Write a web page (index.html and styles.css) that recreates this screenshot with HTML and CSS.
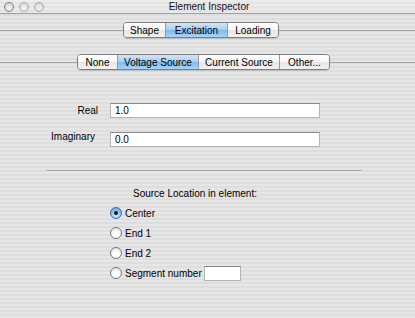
FILE: index.html
```html
<!DOCTYPE html>
<html lang="en">
<head>
  <meta charset="UTF-8" />
  <title>Element Inspector</title>
  <link rel="stylesheet" href="styles.css">
</head>
<body>
  <div class="window">
    <div class="titlebar">
      <div class="lights">
        <span class="light"></span>
        <span class="light"></span>
        <span class="light"></span>
      </div>
      <div class="title">Element Inspector</div>
    </div>

    <div class="seg-row tabs">
      <div class="segmented">
        <span class="seg" style="width:41px">Shape</span>
        <span class="seg selected" style="width:61px">Excitation</span>
        <span class="seg" style="width:50px">Loading</span>
      </div>
    </div>

    <div class="seg-row subtabs">
      <div class="segmented">
        <span class="seg" style="width:39px">None</span>
        <span class="seg selected" style="width:80px">Voltage Source</span>
        <span class="seg" style="width:80px">Current Source</span>
        <span class="seg" style="width:49px">Other...</span>
      </div>
    </div>

    <div class="fields">
      <label class="field-label real">Real</label>
      <input class="field" type="text" value="1.0" />
      <label class="field-label imag">Imaginary</label>
      <input class="field" type="text" value="0.0" />
    </div>

    <div class="divider"></div>

    <div class="location">
      <div class="location-title">Source Location in element:</div>
      <div class="radios">
        <div class="radio-row"><span class="radio on"></span>Center</div>
        <div class="radio-row"><span class="radio"></span>End 1</div>
        <div class="radio-row"><span class="radio"></span>End 2</div>
        <div class="radio-row"><span class="radio"></span>Segment number <input class="small-field" type="text" /></div>
      </div>
    </div>
  </div>
</body>
</html>
```

FILE: styles.css
```css
html, body {
  margin: 0;
  padding: 0;
}

body {
  font-family: 'Liberation Sans', Arial, sans-serif;
  font-size: 10px;
  color: #000;
  width: 415px;
  height: 318px;
  overflow: hidden;
}

.window {
  height: 318px;
  background: repeating-linear-gradient(to bottom, #e6e6e6 0, #e6e6e6 2px, #dedede 2px, #dedede 4px);
}

.titlebar {
  height: 13px;
  position: relative;
  display: flex;
  align-items: center;
  justify-content: center;
  background: repeating-linear-gradient(to bottom, #ececec 0, #ececec 2px, #e4e4e4 2px, #e4e4e4 4px);
  border-bottom: 1px solid #9e9e9e;
}

.lights {
  position: absolute;
  left: 4px;
  top: 2px;
  display: flex;
  gap: 5px;
}

.light {
  width: 8px;
  height: 8px;
  border-radius: 50%;
  border: 1px solid #a8a8a8;
  background: radial-gradient(circle at 50% 70%, #f4f4f4, #cfcfcf);
}

.light:first-child {
  border-color: #7c7c7c;
}

.title {
  margin-top: -1px;
  margin-left: 3px;
  font-size: 10px;
  color: #111;
}

.seg-row {
  display: flex;
  align-items: center;
}

.seg-row::before,
.seg-row::after {
  content: "";
  flex: 1;
  height: 1px;
  background: #a4a4a4;
}

.tabs {
  margin-top: 8px;
}

.subtabs {
  margin-top: 16px;
}

.subtabs::before {
  flex: 0 0 77px;
}

.tabs::before {
  flex: 0 0 123px;
}

.segmented {
  display: flex;
  height: 14px;
  border: 1px solid #7f7f7f;
  border-radius: 4px;
  overflow: hidden;
  box-shadow: 0 1px 1px rgba(0,0,0,0.15);
}

.seg {
  display: flex;
  align-items: center;
  justify-content: center;
  background: linear-gradient(to bottom, #ffffff 0%, #f6f6f6 50%, #e6e6e6 51%, #f2f2f2 100%);
  border-left: 1px solid #9a9a9a;
  color: #000;
  white-space: nowrap;
}

.seg:first-child {
  border-left: none;
}

.seg.selected {
  background: linear-gradient(to bottom, #cfe6fb 0%, #a5cff5 50%, #7db8ee 51%, #a9d4f8 100%);
}

.fields {
  display: grid;
  grid-template-columns: 98px 210px;
  column-gap: 12px;
  row-gap: 14px;
  margin-top: 33px;
  align-items: center;
}

.field-label {
  text-align: right;
}

.field-label.imag {
  padding-right: 3px;
  margin-top: -6px;
}

.field {
  box-sizing: border-box;
  height: 15px;
  width: 210px;
  margin: 0;
  padding: 0 4px;
  font-family: inherit;
  font-size: 10px;
  color: #000;
  background: #fff;
  border: 1px solid #b4b4b4;
  border-top-color: #8a8a8a;
  outline: none;
}

.divider {
  margin: 23px 53px 0 46px;
  height: 1px;
  background: #a0a0a0;
  border-bottom: 1px solid #efefef;
}

.location-title {
  margin-top: 16px;
  padding-left: 133px;
}

.radios {
  margin-top: 8px;
  padding-left: 110px;
  display: flex;
  flex-direction: column;
  gap: 8px;
}

.radio-row {
  display: flex;
  align-items: center;
  height: 12px;
}

.radio {
  box-sizing: border-box;
  width: 12px;
  height: 12px;
  margin-right: 3px;
  border-radius: 50%;
  border: 1px solid #7a7a7a;
  background: radial-gradient(circle at 50% 70%, #ffffff 30%, #dcdcdc 100%);
  display: flex;
  align-items: center;
  justify-content: center;
}

.radio.on {
  border-color: #3a6fb0;
  background: radial-gradient(circle at 50% 70%, #bfe0fb 20%, #4a94e0 100%);
}

.radio.on::after {
  content: "";
  width: 4px;
  height: 4px;
  border-radius: 50%;
  background: #111;
}

.small-field {
  box-sizing: border-box;
  width: 37px;
  height: 15px;
  margin: 0 0 0 2px;
  padding: 0;
  background: #fff;
  border: 1px solid #b4b4b4;
  border-top-color: #8a8a8a;
  outline: none;
}
```
